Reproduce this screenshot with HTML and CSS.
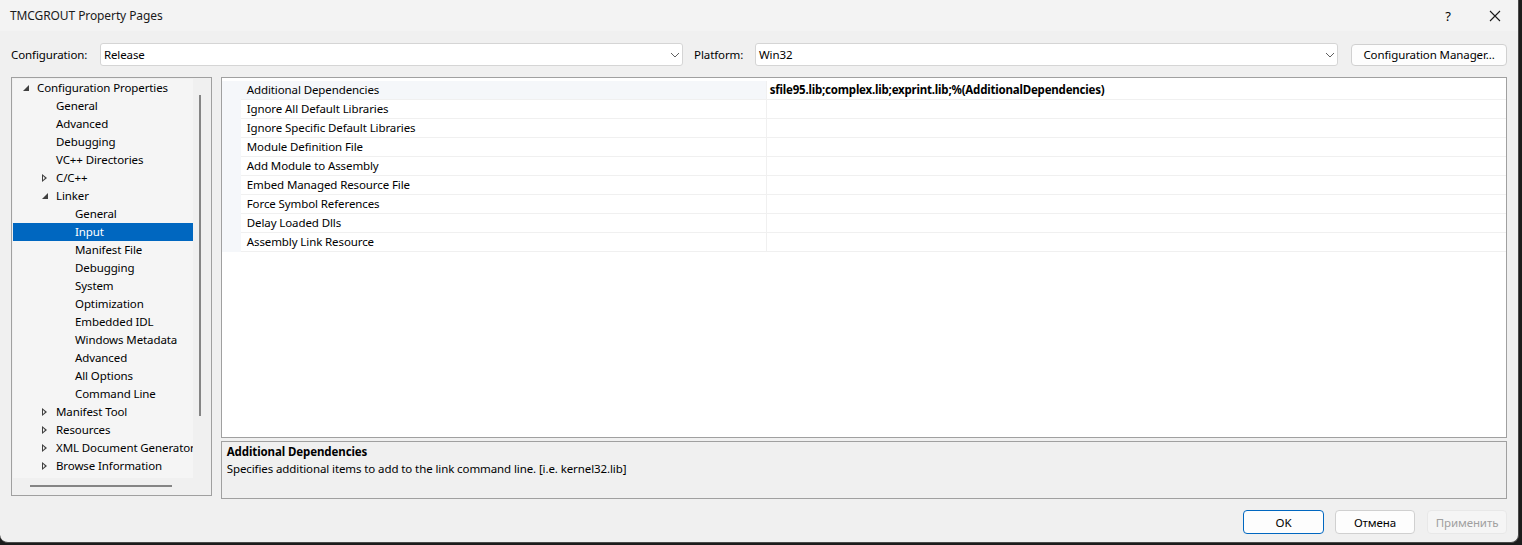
FILE: index.html
```html
<!DOCTYPE html>
<html lang="en">
<head>
  <meta charset="UTF-8">
  <title>TMCGROUT Property Pages</title>
  <link rel="stylesheet" href="styles.css">
</head>
<body>
  <div class="window">
    <!-- title bar -->
    <div class="titlebar">
      <span class="title">TMCGROUT Property Pages</span>
      <span class="help">?</span>
      <span class="close">
        <svg width="12" height="12" viewBox="0 0 12 12"><path d="M1 1 L11 11 M11 1 L1 11" stroke="#1a1a1a" stroke-width="1.1" fill="none"/></svg>
      </span>
    </div>

    <div class="content">
      <!-- configuration / platform -->
      <div class="config-row">
        <label class="config-label">Configuration:</label>
        <div class="combo">
          <span>Release</span>
          <svg class="chevron" width="10" height="6" viewBox="0 0 10 6"><path d="M1 1 L5 5 L9 1" stroke="#606060" stroke-width="1" fill="none"/></svg>
        </div>
        <label class="platform-label">Platform:</label>
        <div class="combo">
          <span>Win32</span>
          <svg class="chevron" width="10" height="6" viewBox="0 0 10 6"><path d="M1 1 L5 5 L9 1" stroke="#606060" stroke-width="1" fill="none"/></svg>
        </div>
        <button class="btn manager">Configuration Manager...</button>
      </div>

      <div class="main">
        <!-- tree -->
        <div class="tree">
          <div class="tree-body">
            <div class="tree-rows">
              <div class="node lvl0"><span class="exp open"></span>Configuration Properties</div>
              <div class="node lvl1"><span class="exp"></span>General</div>
              <div class="node lvl1"><span class="exp"></span>Advanced</div>
              <div class="node lvl1"><span class="exp"></span>Debugging</div>
              <div class="node lvl1"><span class="exp"></span>VC++ Directories</div>
              <div class="node lvl1"><span class="exp closed"></span>C/C++</div>
              <div class="node lvl1"><span class="exp open"></span>Linker</div>
              <div class="node lvl2">General</div>
              <div class="node lvl2 selected">Input</div>
              <div class="node lvl2">Manifest File</div>
              <div class="node lvl2">Debugging</div>
              <div class="node lvl2">System</div>
              <div class="node lvl2">Optimization</div>
              <div class="node lvl2">Embedded IDL</div>
              <div class="node lvl2">Windows Metadata</div>
              <div class="node lvl2">Advanced</div>
              <div class="node lvl2">All Options</div>
              <div class="node lvl2">Command Line</div>
              <div class="node lvl1"><span class="exp closed"></span>Manifest Tool</div>
              <div class="node lvl1"><span class="exp closed"></span>Resources</div>
              <div class="node lvl1"><span class="exp closed"></span>XML Document Generator</div>
              <div class="node lvl1"><span class="exp closed"></span>Browse Information</div>
            </div>
            <div class="vscroll"><div class="vthumb"></div></div>
          </div>
          <div class="hscroll"><div class="hthumb"></div></div>
        </div>

        <div class="right">
          <!-- property grid -->
          <div class="grid">
            <div class="prop current"><div class="gutter"></div><div class="name">Additional Dependencies</div><div class="value">sfile95.lib;complex.lib;exprint.lib;%(AdditionalDependencies)</div></div>
            <div class="prop"><div class="gutter"></div><div class="name">Ignore All Default Libraries</div><div class="value"></div></div>
            <div class="prop"><div class="gutter"></div><div class="name">Ignore Specific Default Libraries</div><div class="value"></div></div>
            <div class="prop"><div class="gutter"></div><div class="name">Module Definition File</div><div class="value"></div></div>
            <div class="prop"><div class="gutter"></div><div class="name">Add Module to Assembly</div><div class="value"></div></div>
            <div class="prop"><div class="gutter"></div><div class="name">Embed Managed Resource File</div><div class="value"></div></div>
            <div class="prop"><div class="gutter"></div><div class="name">Force Symbol References</div><div class="value"></div></div>
            <div class="prop"><div class="gutter"></div><div class="name">Delay Loaded Dlls</div><div class="value"></div></div>
            <div class="prop"><div class="gutter"></div><div class="name">Assembly Link Resource</div><div class="value"></div></div>
          </div>

          <!-- description -->
          <div class="desc">
            <div class="desc-title">Additional Dependencies</div>
            <div class="desc-text">Specifies additional items to add to the link command line. [i.e. kernel32.lib]</div>
          </div>
        </div>
      </div>

      <div class="buttons">
        <button class="btn default">OK</button>
        <button class="btn cancel">Отмена</button>
        <button class="btn disabled">Применить</button>
      </div>
    </div>
  </div>
</body>
</html>
```

FILE: styles.css
```css
* {
  box-sizing: border-box;
}

body {
  margin: 0;
  background: #1c1c1c;
  font-family: 'Noto Sans', 'Liberation Sans', sans-serif;
  font-size: 11.5px;
  letter-spacing: -0.1px;
  color: #000;
}

.window {
  width: 1519px;
  height: 543px;
  background: #f0f0f0;
  border-radius: 0 0 8px 8px;
  overflow: hidden;
  border-right: 1px solid #4a4a4a;
  border-bottom: 1px solid #4a4a4a;
}

/* title bar */
.titlebar {
  height: 31px;
  display: flex;
  align-items: center;
  padding-left: 10px;
  background: #f3f3f3;
}

.title {
  flex: 1;
  font-size: 12px;
  color: #1a1a1a;
}

.help {
  width: 46px;
  text-align: center;
  font-size: 13px;
  margin-right: 1px;
}

.close {
  width: 46px;
  display: flex;
  justify-content: center;
}

.content {
  padding: 12px 11px 0 11px;
}

/* configuration row */
.config-row {
  display: flex;
  align-items: center;
  height: 23px;
}

.config-label {
  width: 89px;
}

.platform-label {
  margin-left: 11px;
  width: 61px;
}

.combo {
  width: 584px;
  height: 23px;
  background: #fff;
  border: 1px solid #d5d5d5;
  border-radius: 3px;
  display: flex;
  align-items: center;
  justify-content: space-between;
  padding: 0 2px 0 3px;
}

.btn {
  font-family: inherit;
  font-size: 11.5px;
  letter-spacing: -0.1px;
  color: #000;
  background: #fdfdfd;
  border: 1px solid #d0d0d0;
  border-radius: 4px;
  height: 23px;
  padding: 0;
}

.manager {
  margin-left: 13px;
  width: 156px;
  height: 22px;
}

/* main area */
.main {
  display: flex;
  margin-top: 11px;
}

.tree {
  width: 201px;
  height: 419px;
  border: 1px solid #a0a0a0;
  background: #f0f0f0;
  padding: 1px;
  display: flex;
  flex-direction: column;
}

.tree-body {
  display: flex;
  flex: 1;
}

.tree-rows {
  width: 180px;
  background: #f5f5f5;
  white-space: nowrap;
  overflow: hidden;
}

.node {
  height: 18px;
  line-height: 18px;
  display: flex;
  align-items: center;
}

.lvl0 { padding-left: 8px; }
.lvl1 { padding-left: 27px; }
.lvl2 { padding-left: 62px; }

.exp {
  width: 16px;
  height: 18px;
  position: relative;
  flex-shrink: 0;
}

.exp.open::before {
  content: "";
  position: absolute;
  left: 2px;
  top: 6px;
  border-style: solid;
  border-width: 0 0 6px 6px;
  border-color: transparent transparent #404040 transparent;
}

.exp.closed::before {
  content: "";
  position: absolute;
  left: 2px;
  top: 5px;
  border-style: solid;
  border-width: 4px 0 4px 5px;
  border-color: transparent transparent transparent #404040;
}

.exp.closed::after {
  content: "";
  position: absolute;
  left: 3px;
  top: 7px;
  border-style: solid;
  border-width: 2px 0 2px 2.5px;
  border-color: transparent transparent transparent #f5f5f5;
}

.selected {
  background: #0067c0;
  color: #fff;
}

.vscroll {
  flex: 1;
  position: relative;
}

.vthumb {
  position: absolute;
  left: 6px;
  top: 16px;
  width: 2px;
  height: 321px;
  background: #858585;
}

.hscroll {
  height: 16px;
  position: relative;
}

.hthumb {
  position: absolute;
  left: 17px;
  top: 7px;
  width: 142px;
  height: 2px;
  background: #858585;
}

.right {
  margin-left: 9px;
  width: 1288px;
  display: flex;
  flex-direction: column;
}

/* property grid */
.grid {
  height: 361px;
  background: #fff;
  border: 1px solid #a0a0a0;
  padding-top: 3px;
}

.prop {
  display: flex;
  height: 19px;
}

.gutter {
  width: 19px;
  background: #f5f7fa;
}

.name {
  width: 526px;
  padding-left: 6px;
  line-height: 18px;
  border-bottom: 1px solid #f0f0f0;
  border-right: 1px solid #f0f0f0;
}

.current .name {
  background: #f5f7fa;
}

.value {
  flex: 1;
  padding-left: 3px;
  line-height: 18px;
  font-weight: bold;
  letter-spacing: -0.2px;
  border-bottom: 1px solid #f0f0f0;
}

/* description */
.desc {
  margin-top: 3px;
  height: 58px;
  border: 1px solid #a0a0a0;
  padding: 1px 5px;
}

.desc-title {
  font-weight: bold;
  line-height: 17px;
}

.desc-text {
  line-height: 17px;
}

/* bottom buttons */
.buttons {
  display: flex;
  justify-content: flex-end;
  margin-top: 11px;
}

.buttons .btn {
  width: 80px;
  height: 24px;
}

.buttons .default {
  width: 81px;
  border-color: #0067c0;
}

.buttons .cancel {
  margin: 0 12px 0 11px;
}

.buttons .disabled {
  background: #f5f5f5;
  border-color: #e8e8e8;
  color: #a0a0a0;
}
```
